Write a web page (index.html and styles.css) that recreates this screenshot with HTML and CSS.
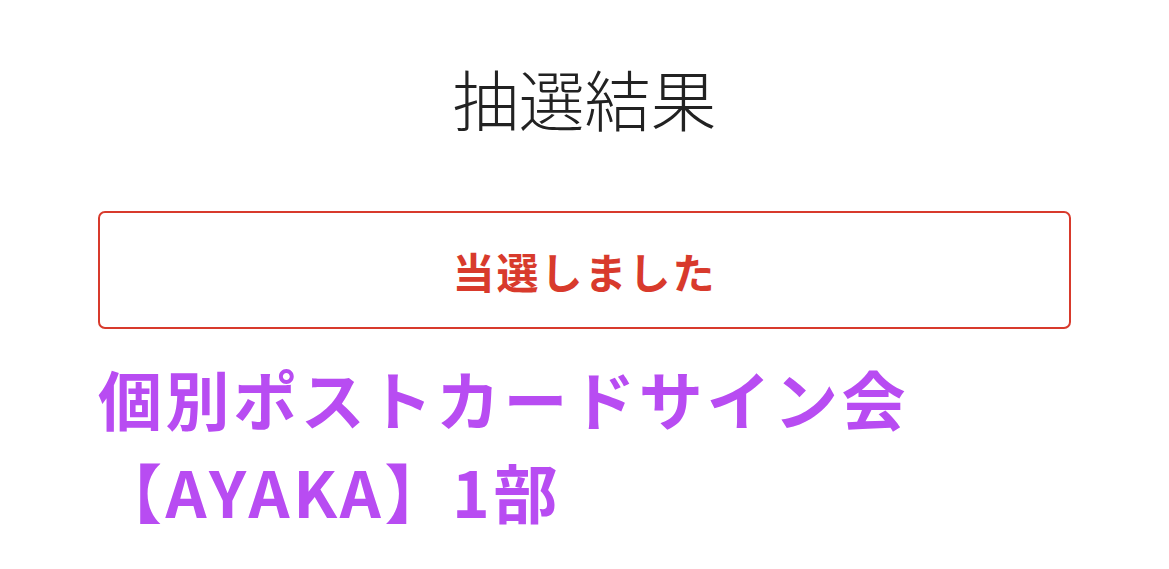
FILE: index.html
```html
<!DOCTYPE html>
<html lang="ja">
<head>
<meta charset="utf-8">
<link rel="stylesheet" href="styles.css">
</head>
<body>
<main class="page">
  <h1 class="title">抽選結果</h1>
  <div class="result-box">当選しました</div>
  <h2 class="event">個別ポストカードサイン会【AYAKA】1部</h2>
</main>
</body>
</html>
```
FILE: styles.css
```css
html, body {
  margin: 0;
  padding: 0;
  background: #ffffff;
}
body {
  font-family: "Noto Sans CJK JP", "Noto Sans", sans-serif;
}
.page {
  width: 973px;
  margin: 0 auto;
  padding-top: 47px;
  display: flex;
  flex-direction: column;
}
.title {
  margin: 0;
  text-align: center;
  font-size: 66px;
  font-weight: 300;
  line-height: 100px;
  color: #222222;
}
.result-box {
  margin-top: 64px;
  height: 114px;
  border: 2px solid #d83a2c;
  border-radius: 7px;
  display: flex;
  align-items: center;
  justify-content: center;
  font-size: 42px;
  font-weight: 700;
  color: #d83a2c;
  letter-spacing: 2px;
}
.event {
  margin: 22px 0 0;
  width: 860px;
  font-size: 64px;
  font-weight: 700;
  line-height: 93px;
  letter-spacing: 3.6px;
  color: #b84cf2;
}
```
